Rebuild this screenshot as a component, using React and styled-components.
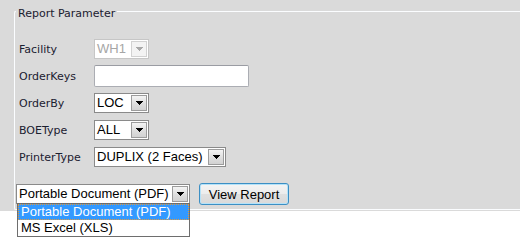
import React from 'react';
import styled, { createGlobalStyle } from 'styled-components';

const Global = createGlobalStyle`
  html, body { margin: 0; padding: 0; background: #ffffff; }
  body { font-family: "DejaVu Sans", Verdana, sans-serif; }
`;

const Page = styled.div`
  min-height: 100vh;
  background: #ffffff;
`;

const Panel = styled.div`
  background: #dadada;
  height: 211px;
  padding-top: 11px;
  box-sizing: border-box;
`;

const Frame = styled.section`
  position: relative;
  margin-left: 14px;
  padding: 0 0 4px 1px;
  border: 1px solid #fbfdff;
  border-right: none;
  border-radius: 2px 0 0 2px;
`;

const Legend = styled.h2`
  position: absolute;
  top: -5px;
  left: 1px;
  margin: 0;
  padding: 0 2px;
  background: #dadada;
  font-size: 11px;
  line-height: 13px;
  font-weight: normal;
  color: #1b2030;
`;

const Grid = styled.div`
  display: grid;
  grid-template-columns: 78px auto;
  grid-auto-rows: 27px;
  align-items: center;
  justify-items: start;
  padding-top: 23px;
`;

const Label = styled.label`
  padding: 2px 0 0 3px;
  font-size: 11px;
  color: #1b2030;
`;

const SelectFrame = styled.div`
  position: relative;
  display: flex;
  align-items: center;
  width: ${p => p.$w}px;
  height: 20px;
  box-sizing: border-box;
  border: 1px solid ${p => (p.$disabled ? '#c6c6c6' : '#8a8a8a')};
  background: #ffffff;
  font-family: "Liberation Sans", Arial, sans-serif;
  font-size: 13px;
  color: ${p => (p.$disabled ? '#a6a6a6' : '#000000')};
`;

const SelectValue = styled.span`
  flex: 1;
  padding-left: 2px;
  white-space: nowrap;
  line-height: 18px;
`;

const ArrowBtn = styled.span`
  display: flex;
  align-items: center;
  justify-content: center;
  width: 16px;
  height: 16px;
  margin-right: 1px;
  box-sizing: border-box;
  border: 1px solid ${p => (p.$disabled ? '#d2d2d2' : '#9c9c9c')};
  background: ${p =>
    p.$disabled ? '#f3f3f3' : 'linear-gradient(#f4f4f4, #dedede 55%, #d2d2d2)'};
`;

const TextInput = styled.input`
  width: 155px;
  height: 22px;
  box-sizing: border-box;
  margin: 0;
  padding: 0 3px;
  border: 1px solid #abadb3;
  border-top-color: #9a9ca3;
  border-radius: 2px;
  background: #ffffff;
  font: 13px "Liberation Sans", Arial, sans-serif;
  outline: none;
`;

const ActionRow = styled.div`
  display: flex;
  align-items: center;
  gap: 9px;
  margin-top: 13px;
  height: 22px;
`;

const Button = styled.button`
  width: 90px;
  height: 22px;
  margin: 0;
  padding: 0;
  box-sizing: border-box;
  border: 1px solid #3c8fc4;
  border-radius: 3px;
  box-shadow: inset 0 0 0 1px #b5e2f8;
  background: linear-gradient(#f4f4f4, #ececec 50%, #e0e0e0 51%, #d9d9d9);
  font: 13px "Liberation Sans", Arial, sans-serif;
  color: #000000;
`;

const DropList = styled.ul`
  position: absolute;
  top: 100%;
  left: 0px;
  width: 173px;
  margin: 0;
  padding: 0;
  list-style: none;
  box-sizing: border-box;
  border: 1px solid #6e6e6e;
  background: #ffffff;
  z-index: 2;
`;

const DropItem = styled.li`
  height: 16px;
  line-height: 16px;
  padding-left: 3px;
  white-space: nowrap;
  color: ${p => (p.$active ? '#ffffff' : '#000000')};
  background: ${p => (p.$active ? '#3399ff' : 'transparent')};
  outline: ${p => (p.$active ? '1px dotted #e49a3c' : 'none')};
  outline-offset: -1px;
`;

const Arrow = ({ color }) => (
  <svg width="7" height="4" viewBox="0 0 7 4" shapeRendering="crispEdges">
    <rect x="0" y="0" width="7" height="1" fill={color} />
    <rect x="1" y="1" width="5" height="1" fill={color} />
    <rect x="2" y="2" width="3" height="1" fill={color} />
    <rect x="3" y="3" width="1" height="1" fill={color} />
  </svg>
);

const Select = ({ value, width, disabled, children }) => (
  <SelectFrame $w={width} $disabled={disabled}>
    <SelectValue>{value}</SelectValue>
    <ArrowBtn $disabled={disabled}>
      <Arrow color={disabled ? '#a8a8a8' : '#000000'} />
    </ArrowBtn>
    {children}
  </SelectFrame>
);

export default function App() {
  return (
    <Page>
      <Global />
      <Panel>
        <Frame>
          <Legend>Report Parameter</Legend>
          <Grid>
            <Label>Facility</Label>
            <Select value="WH1" width={55} disabled />
            <Label>OrderKeys</Label>
            <TextInput defaultValue="" />
            <Label>OrderBy</Label>
            <Select value="LOC" width={55} />
            <Label>BOEType</Label>
            <Select value="ALL" width={55} />
            <Label>PrinterType</Label>
            <Select value="DUPLIX (2 Faces)" width={132} />
          </Grid>
          <ActionRow>
            <Select value="Portable Document (PDF)" width={174}>
              <DropList>
                <DropItem $active>Portable Document (PDF)</DropItem>
                <DropItem>MS Excel (XLS)</DropItem>
              </DropList>
            </Select>
            <Button>View Report</Button>
          </ActionRow>
        </Frame>
      </Panel>
    </Page>
  );
}
